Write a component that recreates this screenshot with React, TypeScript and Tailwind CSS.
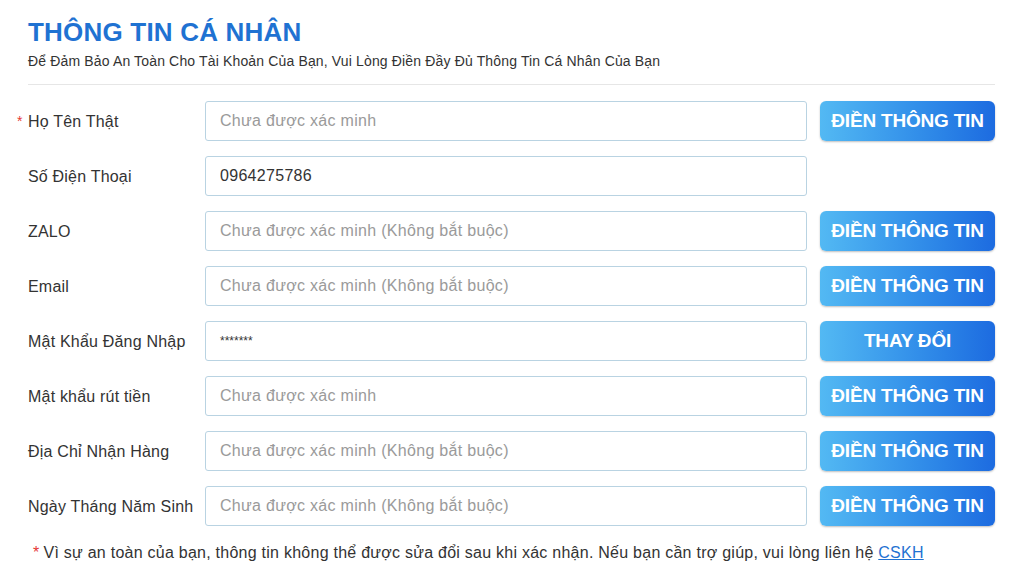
const rows = [
  { label: 'Họ Tên Thật', required: true, value: 'Chưa được xác minh', filled: false, action: 'ĐIỀN THÔNG TIN' },
  { label: 'Số Điện Thoại', value: '0964275786', filled: true },
  { label: 'ZALO', value: 'Chưa được xác minh (Không bắt buộc)', filled: false, action: 'ĐIỀN THÔNG TIN' },
  { label: 'Email', value: 'Chưa được xác minh (Không bắt buộc)', filled: false, action: 'ĐIỀN THÔNG TIN' },
  { label: 'Mật Khẩu Đăng Nhập', value: '*******', filled: true, small: true, action: 'THAY ĐỔI' },
  { label: 'Mật khẩu rút tiền', value: 'Chưa được xác minh', filled: false, action: 'ĐIỀN THÔNG TIN' },
  { label: 'Địa Chỉ Nhận Hàng', value: 'Chưa được xác minh (Không bắt buộc)', filled: false, action: 'ĐIỀN THÔNG TIN' },
  { label: 'Ngày Tháng Năm Sinh', value: 'Chưa được xác minh (Không bắt buộc)', filled: false, action: 'ĐIỀN THÔNG TIN' },
];

export default function App() {
  return (
    <div className="w-[1024px] h-[585px] bg-white overflow-hidden font-['Liberation_Sans',Arial,sans-serif] pl-[28px] pr-[29px] pt-[15px]">
      <h1 className="text-[26px] leading-[34px] font-bold text-[#1f72d2] tracking-[0.2px]">THÔNG TIN CÁ NHÂN</h1>
      <p className="mt-[3px] text-[14px] leading-[18px] text-[#333] tracking-[0.15px]">
        Để Đảm Bảo An Toàn Cho Tài Khoản Của Bạn, Vui Lòng Điền Đầy Đủ Thông Tin Cá Nhân Của Bạn
      </p>
      <div className="mt-[14px] border-t border-[#e6e6e6]" />

      <div className="mt-[16px] flex flex-col gap-[15px]">
        {rows.map((r) => (
          <div key={r.label} className="flex items-center h-[40px]">
            <div className="w-[188px] -ml-[11px] flex items-center text-[16px] text-[#333] tracking-[0.2px] pt-[1px]">
              <span className={`w-[11px] text-[#e53935] text-[14px] ${r.required ? '' : 'invisible'}`}>*</span>
              <span>{r.label}</span>
            </div>
            <div className="w-[602px] h-[40px] rounded-[3px] border border-[#b9d3e2] flex items-center px-[14px]">
              <span className={`${r.small ? 'text-[12px]' : 'text-[16px] tracking-[0.3px]'} ${r.filled ? 'text-[#333]' : 'text-[#9a9a9a]'}`}>
                {r.value}
              </span>
            </div>
            {r.action && (
              <button className="ml-[13px] w-[175px] h-[40px] rounded-[6px] bg-gradient-to-r from-[#53b9f3] to-[#1d6be0] shadow-[0_1px_2px_rgba(0,0,0,0.25)] text-white text-[19px] font-bold tracking-[-0.2px]">
                {r.action}
              </button>
            )}
          </div>
        ))}
      </div>

      <p className="mt-[15px] ml-[5px] text-[16px] text-[#333] tracking-[0.25px]">
        <span className="text-[#e53935] mr-[4px]">*</span>
        Vì sự an toàn của bạn, thông tin không thể được sửa đổi sau khi xác nhận. Nếu bạn cần trợ giúp, vui lòng liên hệ{' '}
        <a className="text-[#1f72d2] underline">CSKH</a>
      </p>
    </div>
  );
}
